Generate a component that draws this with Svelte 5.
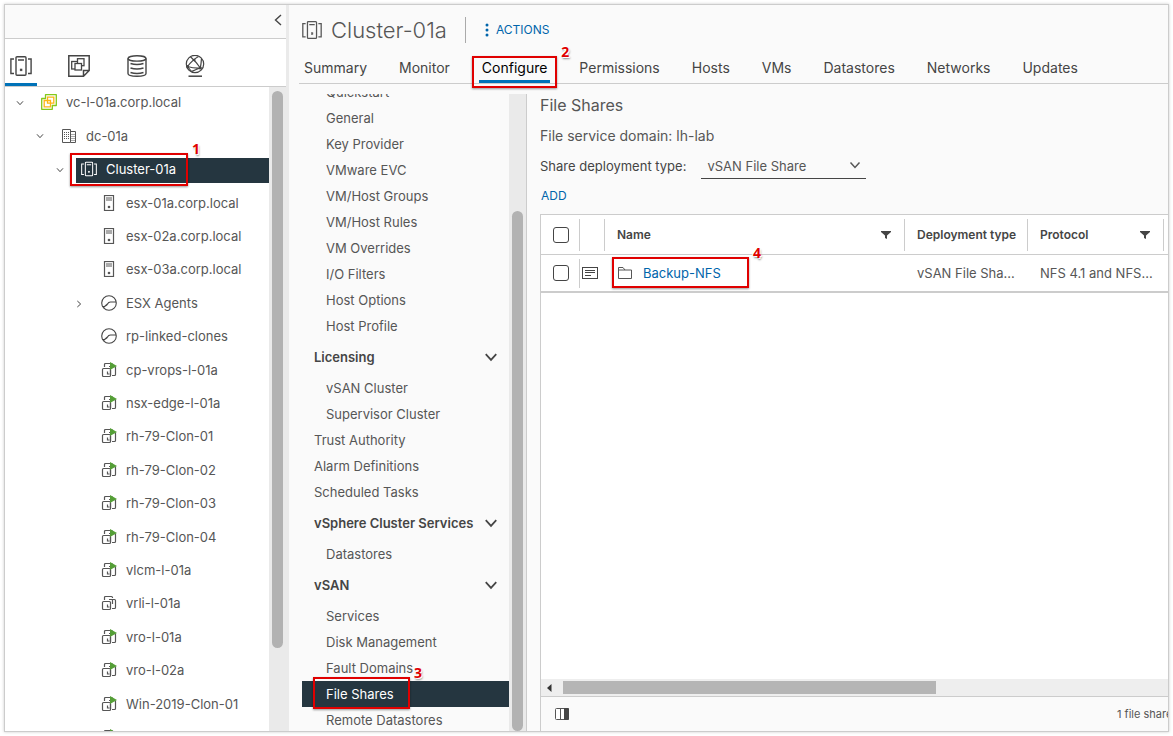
<script>
  const tree = [
    { label: 'vc-l-01a.corp.local', icon: 'vcenter', depth: 0, toggle: 'open' },
    { label: 'dc-01a', icon: 'datacenter', depth: 1, toggle: 'open' },
    { label: 'Cluster-01a', icon: 'cluster', depth: 2, toggle: 'open', selected: true, mark: '1' },
    { label: 'esx-01a.corp.local', icon: 'host', depth: 3 },
    { label: 'esx-02a.corp.local', icon: 'host', depth: 3 },
    { label: 'esx-03a.corp.local', icon: 'host', depth: 3 },
    { label: 'ESX Agents', icon: 'pool', depth: 3, toggle: 'closed' },
    { label: 'rp-linked-clones', icon: 'pool', depth: 3 },
    { label: 'cp-vrops-l-01a', icon: 'vm-on', depth: 3 },
    { label: 'nsx-edge-l-01a', icon: 'vm-on', depth: 3 },
    { label: 'rh-79-Clon-01', icon: 'vm-on', depth: 3 },
    { label: 'rh-79-Clon-02', icon: 'vm-on', depth: 3 },
    { label: 'rh-79-Clon-03', icon: 'vm-on', depth: 3 },
    { label: 'rh-79-Clon-04', icon: 'vm-on', depth: 3 },
    { label: 'vlcm-l-01a', icon: 'vm-on', depth: 3 },
    { label: 'vrli-l-01a', icon: 'vm', depth: 3 },
    { label: 'vro-l-01a', icon: 'vm-on', depth: 3 },
    { label: 'vro-l-02a', icon: 'vm-on', depth: 3 },
    { label: 'Win-2019-Clon-01', icon: 'vm-on', depth: 3 },
    { label: '', icon: 'vm-on', depth: 3 }
  ];

  const tabs = ['Summary', 'Monitor', 'Configure', 'Permissions', 'Hosts', 'VMs', 'Datastores', 'Networks', 'Updates'];
  const views = ['cluster', 'templates', 'storage', 'network'];

  const nav = [
    { label: 'Quickstart', kind: 'sub' },
    { label: 'General', kind: 'sub' },
    { label: 'Key Provider', kind: 'sub' },
    { label: 'VMware EVC', kind: 'sub' },
    { label: 'VM/Host Groups', kind: 'sub' },
    { label: 'VM/Host Rules', kind: 'sub' },
    { label: 'VM Overrides', kind: 'sub' },
    { label: 'I/O Filters', kind: 'sub' },
    { label: 'Host Options', kind: 'sub' },
    { label: 'Host Profile', kind: 'sub' },
    { label: 'Licensing', kind: 'group' },
    { label: 'vSAN Cluster', kind: 'sub' },
    { label: 'Supervisor Cluster', kind: 'sub' },
    { label: 'Trust Authority', kind: 'top' },
    { label: 'Alarm Definitions', kind: 'top' },
    { label: 'Scheduled Tasks', kind: 'top' },
    { label: 'vSphere Cluster Services', kind: 'group' },
    { label: 'Datastores', kind: 'sub' },
    { label: 'vSAN', kind: 'group' },
    { label: 'Services', kind: 'sub' },
    { label: 'Disk Management', kind: 'sub' },
    { label: 'Fault Domains', kind: 'sub' },
    { label: 'File Shares', kind: 'sub', selected: true, mark: '3' },
    { label: 'Remote Datastores', kind: 'sub' }
  ];
</script>

{#snippet mark(n)}
  <span class="mark mark-{n}"><b>{n}</b></span>
{/snippet}

{#snippet chevron(size)}
  <svg class="chev" width={size} height={size} viewBox="0 0 12 12"><path d="M1.500 3.500 6 8.500l4.500-5" fill="none" stroke="currentColor" stroke-width="1.500" /></svg>
{/snippet}

{#snippet filter()}
  <svg width="10" height="10" viewBox="0 0 10 10"><path d="M0 1h10v1L6 5.500v3.500l-2-1V5.500L0 2z" fill="#454545" /></svg>
{/snippet}

{#snippet icon(name, size)}
  {#if name === 'cluster'}
    <svg width={size} height={size} viewBox="0 0 22 22" fill="none" stroke="currentColor" stroke-width="1.400">
      <rect x="6" y="1.700" width="10" height="18.600" rx="1" />
      <path d="M8 5h6M4 4H.900v14.500H4M18 4h3.100v14.500H18" />
      <rect x="10.200" y="14" width="1.800" height="1.800" fill="currentColor" stroke-width=".6" />
    </svg>
  {:else if name === 'templates'}
    <svg width={size} height={size} viewBox="0 0 22 22" fill="none" stroke="currentColor" stroke-width="1.500">
      <path d="M.8.800h20.400v14.700l-5.700 5.700H.800zM21 15.500h-5.500V21" />
      <g stroke-width="1.300" fill="#fff">
        <rect x="3.700" y="6.500" width="7" height="7.500" />
        <rect x="9.500" y="3.700" width="6.500" height="7" />
        <rect x="7" y="8.500" width="6.500" height="6.500" />
      </g>
    </svg>
  {:else if name === 'storage'}
    <svg width={size} height={size} viewBox="0 0 22 22" fill="none" stroke="currentColor" stroke-width="1.400">
      <ellipse cx="11" cy="3.400" rx="9" ry="2.700" />
      <path d="M2 3.400v15.200c0 3.600 18 3.600 18 0V3.400M4.500 8.500c4 1.300 9 1.300 13 0M4.500 13c4 1.300 9 1.300 13 0M4.500 17.500c4 1.300 9 1.300 13 0" />
    </svg>
  {:else if name === 'network'}
    <svg width={size} height={size} viewBox="0 0 22 22" fill="none" stroke="currentColor" stroke-width="1.200">
      <circle cx="11" cy="9" r="8.700" />
      <path d="M4.500 21.200h13.500" stroke-width="1.500" />
      <path d="M6.500 1.800c3 2.700 7 7 9.800 11.200M14.500 1.500C10 4 6.500 7.500 3.500 11.500M3.500 11.500c4 1.200 8 1.700 12.800 1.500M3.500 11.500 7.500 16.500M16.300 13c-3 1-6 2.300-8.800 3.500M17.500 3.500c-.2 3-.5 6-1.200 9.500" />
      <g fill="currentColor" stroke="none"><circle cx="3.500" cy="11.500" r="1.400" /><circle cx="16.300" cy="13" r="1.600" /><circle cx="10.300" cy="5" r="1.300" /></g>
    </svg>
  {:else if name === 'vcenter'}
    <svg width={size} height={size} viewBox="0 0 16 16" fill="none" stroke-width="1.300">
      <path d="M4.500 4.500V.700h10.800v10.800h-4v3.800H.700V4.500z" stroke="#85c81a" stroke-linejoin="round" />
      <path d="M6.500 6.500V3.200h6.300v6H9.500v3.600H3.200V6.500h3.300v2.700h3V6.500z" stroke="#fdb515" />
    </svg>
  {:else if name === 'datacenter'}
    <svg width={size} height={size} viewBox="0 0 16 16" fill="none" stroke="#565656">
      <path d="M1.500 14.500v-13h8v13zM9.500 3.500h5v11h-5" />
      <path d="M3 4.500h5M3 6.500h5M3 8.500h5M3 10.500h5M10.500 6.500h3M10.500 8.500h3M10.500 10.500h3M10.500 12.500h3" stroke-dasharray="1 1" />
    </svg>
  {:else if name === 'host'}
    <svg width={size} height={size} viewBox="0 0 16 16" fill="none" stroke="#565656">
      <rect x="3.500" y=".5" width="9" height="15" stroke-width="1.200" />
      <path d="M5 3h6M5 5h6" />
      <circle cx="8" cy="12" r="1.300" fill="#565656" stroke="none" />
    </svg>
  {:else if name === 'pool'}
    <svg width={size} height={size} viewBox="0 0 16 16" fill="none" stroke="#454545" stroke-width="1.100">
      <circle cx="8" cy="8" r="7.300" />
      <path d="M1.500 11.500c2.500 0 4-.5 5-2.500.7-1.500 1.500-2 3-2h5.500M2.500 12.500 7 8.500" />
    </svg>
  {:else}
    <svg width={size} height={size} viewBox="0 0 16 16" fill="none" stroke="#565656" stroke-width="1.200">
      <path d="M3.500 5V2.500q0-1 1-1h6q1 0 1 1v.5" />
      <rect x="1.500" y="6.500" width="8" height="8" rx="1" />
      <path d="M6.500 9.500v2.500h2M11 13.500h2.500q1 0 1-1v-7q0-1-1-1H8" />
      {#if name === 'vm-on'}
        <path d="M9 0 16 4 9 8z" fill="#559f37" stroke="none" />
        <path d="M9.500 8v5" />
      {:else}
        <path d="M11.500 4.500V9" />
      {/if}
    </svg>
  {/if}
{/snippet}

<div class="frame">
  <aside>
    <div class="collapse">
      <button aria-label="Collapse">
        <svg width="8" height="12" viewBox="0 0 8 12"><path d="M7 1 1.500 6 7 11" fill="none" stroke="#454545" stroke-width="1.400" /></svg>
      </button>
    </div>
    <div class="views">
      {#each views as v, i}
        <button class:active={i === 0} aria-label={v}>{@render icon(v, 22)}</button>
      {/each}
    </div>
    <div class="tree-area">
      <ul class="tree">
        {#each tree as t}
          <li class="d{t.depth}">
            <span class="toggle {t.toggle ?? ''}">{#if t.toggle}{@render chevron(8)}{/if}</span>
            <span class="node" class:selected={t.selected}>
              {@render icon(t.icon, 16)}
              <span>{t.label}</span>
              {#if t.mark}{@render mark(t.mark)}{/if}
            </span>
          </li>
        {/each}
      </ul>
      <div class="track"><div class="thumb tree-thumb"></div></div>
    </div>
  </aside>
  <div class="splitter"><i></i></div>

  <main>
    <header>
      {@render icon('cluster', 20)}
      <h1>Cluster-01a</h1>
      <button class="actions">
        <svg width="4" height="14" viewBox="0 0 4 14" fill="#0065ab"><circle cx="2" cy="2" r="1.500" /><circle cx="2" cy="7" r="1.500" /><circle cx="2" cy="12" r="1.500" /></svg>
        ACTIONS
      </button>
    </header>
    <nav class="tabs">
      {#each tabs as t}
        <button class:current={t === 'Configure'}>{t}{#if t === 'Configure'}{@render mark('2')}{/if}</button>
      {/each}
    </nav>
    <div class="body">
      <div class="side">
        <ul class="menu">
          {#each nav as n}
            <li class={n.kind} class:selected={n.selected}>
              <span>{n.label}</span>
              {#if n.kind === 'group'}{@render chevron(14)}{/if}
              {#if n.mark}{@render mark(n.mark)}{/if}
            </li>
          {/each}
        </ul>
        <div class="track"><div class="thumb menu-thumb"></div></div>
      </div>
      <section>
        <h2>File Shares</h2>
        <p class="domain">File service domain: lh-lab</p>
        <div class="field">
          <label for="deploy">Share deployment type:</label>
          <div class="select">
            <select id="deploy"><option>vSAN File Share</option></select>
            {@render chevron(12)}
          </div>
        </div>
        <button class="add">ADD</button>
        <div class="grid">
          <table>
            <colgroup><col class="c-check" /><col class="c-info" /><col /><col class="c-type" /><col class="c-proto" /><col class="c-rest" /></colgroup>
            <thead>
              <tr>
                <th><input type="checkbox" aria-label="Select all" /></th>
                <th></th>
                <th><div class="head">Name {@render filter()}</div></th>
                <th><div class="head">Deployment type</div></th>
                <th><div class="head">Protocol {@render filter()}</div></th>
                <th></th>
              </tr>
            </thead>
            <tbody>
              <tr>
                <td class="ruled"><input type="checkbox" aria-label="Select Backup-NFS" /></td>
                <td class="info">
                  <svg width="16" height="12" viewBox="0 0 16 12" fill="none" stroke="#454545"><rect x=".5" y=".5" width="15" height="11" /><path d="M3 3.500h10M3 5.500h10M3 8.500h6" /></svg>
                </td>
                <td>
                  <div class="name">
                    <svg width="14" height="12" viewBox="0 0 14 12" fill="none" stroke="#565656"><path d="M.5 11.500V.500h4.500l2 2.500h6.500v8.500zM1 3h6" /></svg>
                    <a href="#share">Backup-NFS</a>
                    {@render mark('4')}
                  </div>
                </td>
                <td><div class="cell">vSAN File Sha...</div></td>
                <td><div class="cell">NFS 4.1 and NFS...</div></td>
                <td></td>
              </tr>
            </tbody>
          </table>
          <div class="hscroll">
            <svg width="5" height="8" viewBox="0 0 5 8"><path d="M4.500 0v8L0 4z" fill="#333" /></svg>
            <div class="hthumb"></div>
          </div>
          <footer>
            <button aria-label="Columns">
              <svg width="14" height="12" viewBox="0 0 14 12"><rect x=".5" y=".5" width="13" height="11" rx="1" fill="#fff" stroke="#565656" /><path d="M5.500 0v12" stroke="#565656" /><path d="M9 0h4q1 0 1 1v10q0 1-1 1H9z" fill="#454545" /></svg>
            </button>
            <span class="count">1 file share</span>
          </footer>
        </div>
      </section>
    </div>
  </main>
</div>

<style>
  :global(body) { margin: 0; background: #fff; }
  * { box-sizing: border-box; }
  button { border: 0; padding: 0; background: none; font: inherit; color: inherit; cursor: pointer; }
  ul { list-style: none; margin: 0; padding: 0; }
  svg { flex: none; display: block; }

  .frame {
    display: flex;
    height: calc(100vh - 8px);
    margin: 4px;
    overflow: hidden;
    border: 1px solid #ccc;
    box-shadow: 0 0 3px #ccc;
    background: #fafafa;
    color: #565656;
    font: 13px/20px Inter, 'Noto Sans', sans-serif;
  }

  aside { display: flex; flex-direction: column; flex: 0 0 281px; background: #fff; }
  .collapse { display: flex; flex: 0 0 34px; align-items: center; justify-content: flex-end; padding: 0 4px 4px; border-bottom: 1px solid #ccc; background: #fafafa; }
  .views { display: flex; flex: 0 0 48px; gap: 26px; border-bottom: 1px solid #ccc; color: #454545; }
  .views button { display: flex; width: 32px; align-items: center; justify-content: center; padding-top: 10px; border-bottom: 3px solid transparent; }
  .views .active { border-color: #0072b8; }
  .tree-area { position: relative; display: flex; flex: 1; min-height: 0; margin-right: -3px; }
  .tree { flex: 1; overflow: hidden; }
  .tree li { display: flex; align-items: center; height: 33px; }
  .tree li:nth-child(5n + 2), .tree li:nth-child(5n + 4) { height: 34px; }
  .d0 { padding-left: 11px; }
  .d1 { padding-left: 31px; }
  .d2 { padding-left: 51px; }
  .d3 { padding-left: 71px; }
  .toggle { width: 8px; padding-bottom: 2px; color: #454545; }
  .closed { transform: rotate(-90deg); }
  .node { position: relative; display: flex; flex: 1; align-items: center; gap: 9px; height: 25px; margin-left: 12px; padding: 0 0 3px 5px; }
  .selected { background: #253640; color: #fff; }
  .track { flex: none; padding: 4px 3px 0; background: #eaeaea; }
  .tree-area .track { width: 20px; }
  .thumb { width: 11px; border-radius: 6px; background: #b2b2b2; }
  .tree-thumb { height: 87%; }
  .splitter { display: flex; flex: 0 0 3px; align-items: center; background: #eaeaea; }
  .splitter i { width: 3px; height: 25px; margin-top: 10px; background: #ccc; }

  main { display: flex; flex: 1; min-width: 0; flex-direction: column; padding-left: 10px; }
  header { display: flex; align-items: center; height: 49px; padding-left: 3px; }
  h1 { margin: 0; padding: 0 18px 0 9px; font-size: 22px; line-height: 26px; font-weight: 300; border-right: 1px solid #aaa; }
  .actions { display: flex; align-items: center; gap: 7px; margin-left: 19px; color: #0065ab; font-size: 12px; }
  .tabs { display: flex; flex: 0 0 30px; gap: 32px; padding-left: 5px; border-bottom: 1px solid #ccc; }
  .tabs button { position: relative; height: 29px; font-size: 14px; line-height: 20px; padding-bottom: 1px; white-space: nowrap; color: #454545; }
  .tabs .current { color: #000; }
  .tabs .current::before { content: ''; position: absolute; left: -3px; right: -3px; bottom: 0; height: 3px; background: #0072b8; }
  .body { display: flex; flex: 1; min-height: 0; padding: 10px 0 0 3px; }
  .side { display: flex; flex: 0 0 225px; border-right: 1px solid #ccc; overflow: hidden; }
  .menu { flex: 1; margin-top: -15px; }
  .menu li { position: relative; display: flex; align-items: center; justify-content: space-between; height: 26px; padding: 0 11px 0 24px; white-space: nowrap; }
  .menu .top { padding-left: 12px; }
  .menu .group { height: 36px; padding-left: 12px; font-weight: 600; color: #454545; }
  .menu .selected { background: #253640; }
  .side .track { width: 17px; padding-top: 117px; }
  .menu-thumb { height: 100%; }

  section { display: flex; flex: 1; min-width: 0; flex-direction: column; padding-left: 13px; }
  h2 { margin: 0; font-size: 16px; line-height: 22px; font-weight: 400; }
  .domain { margin: 10px 0 7px; font-size: 14px; line-height: 20px; }
  .field { display: flex; align-items: flex-start; gap: 15px; height: 32px; }
  .field label { line-height: 26px; color: #454545; }
  .select { position: relative; width: 165px; height: 26px; border-bottom: 1px solid #454545; }
  .select select { width: 100%; height: 26px; padding: 0 6px; border: 0; appearance: none; background: none; font: inherit; color: #565656; }
  .select :global(.chev) { position: absolute; right: 5px; top: 6px; pointer-events: none; }
  .add { align-self: flex-start; margin: 1px 0 8px 1px; font-size: 12px; line-height: 20px; color: #0065ab; }
  .grid { display: flex; flex: 1; min-height: 0; flex-direction: column; border: 1px solid #ccc; border-width: 1px 0 0 1px; background: #fff; overflow: hidden; }
  table { width: 100%; table-layout: fixed; border-collapse: separate; border-spacing: 0; }
  .c-check { width: 39px; }
  .c-info { width: 25px; }
  .c-type { width: 123px; }
  .c-proto { width: 136px; }
  .c-rest { width: 4px; }
  th { position: relative; height: 40px; padding: 0; border-bottom: 1px solid #ccc; font-size: 12px; font-weight: 600; color: #454545; }
  td { position: relative; height: 38px; padding: 0; border-bottom: 2px solid #ccc; }
  th:not(:last-child)::after, .ruled::after { content: ''; position: absolute; right: 0; top: 4px; bottom: 3px; border-right: 1px solid #ccc; }
  .head { display: flex; justify-content: space-between; align-items: center; padding: 0 14px 0 12px; white-space: nowrap; }
  input { display: block; appearance: none; width: 16px; height: 16px; margin: 0 0 0 12px; border: 1px solid #454545; border-radius: 3px; background: #fff; }
  .info svg { margin-left: 2px; }
  .name { position: relative; display: flex; align-items: center; gap: 11px; padding-left: 13px; }
  .name a { color: #0065ab; text-decoration: none; }
  .cell { padding-left: 12px; overflow: hidden; white-space: nowrap; }
  .hscroll { display: flex; flex: 0 0 17px; align-items: center; gap: 11px; margin-top: auto; padding-left: 6px; background: #eee; }
  .hthumb { width: 60%; height: 13px; background: #b5b5b5; }
  footer { display: flex; flex: 0 0 35px; align-items: center; justify-content: space-between; padding-left: 14px; border-top: 1px solid #ccc; background: #fafafa; }
  .count { width: 51px; font-size: 11px; white-space: nowrap; }

  /* Numbered callouts laid over the controls */
  .mark { position: absolute; z-index: 2; border: 2px solid #e00000; box-shadow: 0 1px 2px #0006; pointer-events: none; }
  .mark b { position: absolute; left: 100%; top: -15px; margin-left: 6px; color: #e00000; font: bold 14px/18px 'Noto Sans', sans-serif; text-shadow: 1px 1px 0 #fff, -1px -1px 0 #fff, 1px 2px 2px #888; }
  .mark-1 { left: -6px; top: -5px; width: 118px; height: 33px; }
  .mark-2 { left: -10px; right: -10px; top: 2px; height: 32px; }
  .mark-3 { left: 11px; top: -4px; width: 97px; height: 32px; }
  .mark-4 { left: 7px; top: -6px; width: 137px; height: 31px; }
</style>
